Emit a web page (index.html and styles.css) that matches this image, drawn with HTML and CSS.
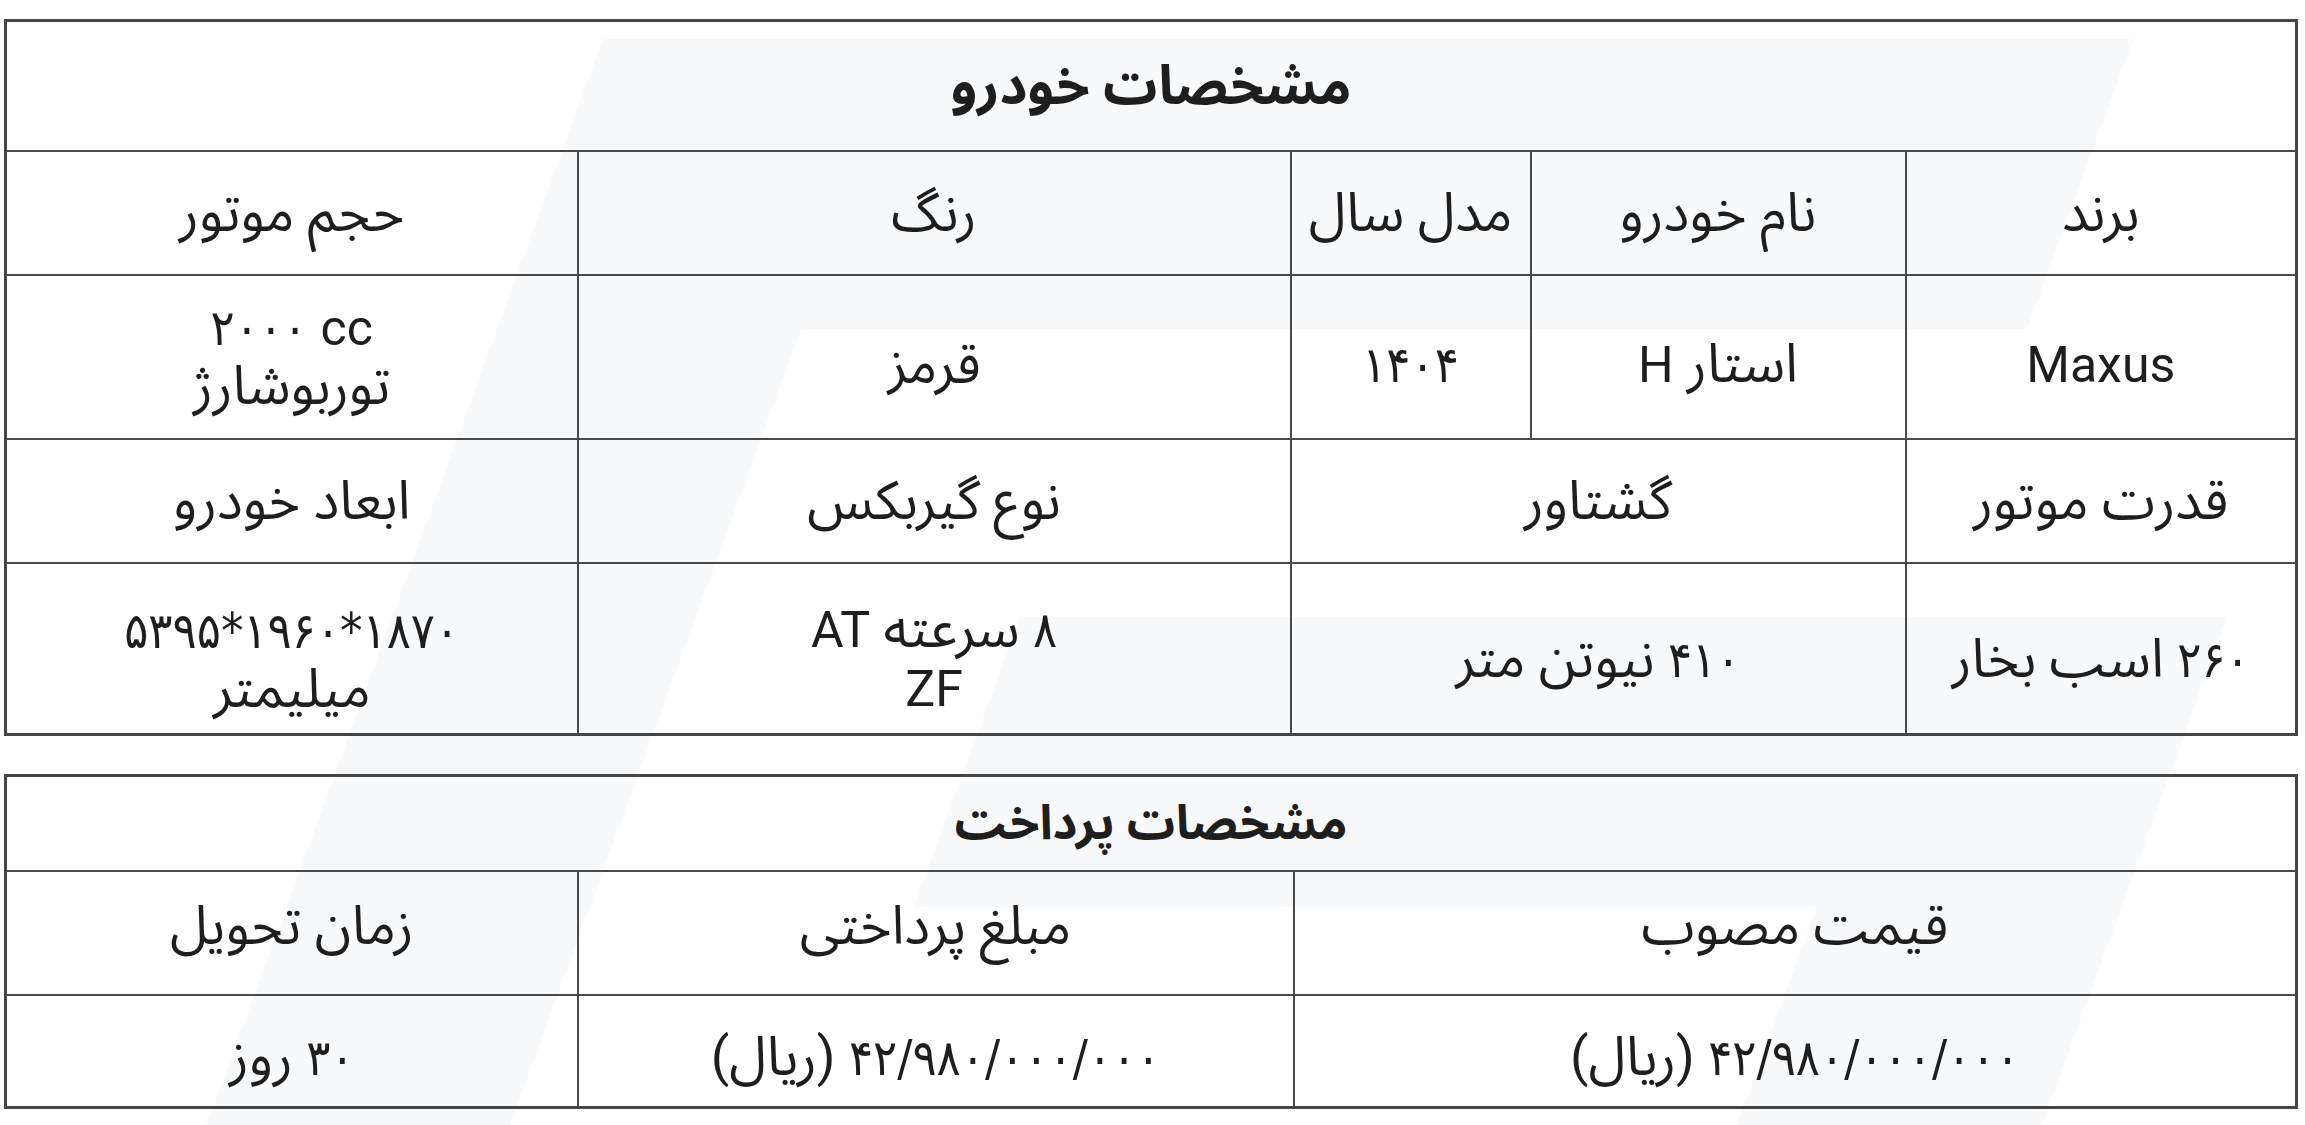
FILE: index.html
```html
<!DOCTYPE html>
<html lang="fa" dir="rtl">
<head>
<meta charset="utf-8">
<title>مشخصات خودرو</title>
<link rel="stylesheet" href="styles.css">
</head>
<body>
<div class="page">
  <svg class="watermark" width="2305" height="1125" viewBox="0 0 2305 1125" aria-hidden="true">
    <polygon points="603,39 2133,39 2027,329 801,329 510,1125 207,1125" />
    <polygon points="1020,617 2227,617 2042,1125 1737,1125 1817,907 914,907" />
  </svg>

  <table class="spec spec-car">
    <colgroup>
      <col class="c-brand"><col class="c-name"><col class="c-year"><col class="c-color"><col class="c-engine">
    </colgroup>
    <tr class="r-title"><th colspan="5">مشخصات خودرو</th></tr>
    <tr class="r-head">
      <td>برند</td><td>نام خودرو</td><td>مدل سال</td><td>رنگ</td><td>حجم موتور</td>
    </tr>
    <tr class="r-data">
      <td class="one"><span class="latin">Maxus</span></td>
      <td class="one">استار <span class="latin">H</span></td>
      <td class="one"><span class="num">۱۴۰۴</span></td>
      <td class="one">قرمز</td>
      <td><span class="ltr"><span class="num">۲۰۰۰</span> <span class="latin">cc</span></span><br>توربوشارژ</td>
    </tr>
    <tr class="r-head">
      <td>قدرت موتور</td><td colspan="2">گشتاور</td><td>نوع گیربکس</td><td>ابعاد خودرو</td>
    </tr>
    <tr class="r-data2">
      <td><span class="num">۲۶۰</span> اسب بخار</td>
      <td colspan="2"><span class="num">۴۱۰</span> نیوتن متر</td>
      <td><span class="num">۸</span> سرعته <span class="latin">AT</span><br><span class="latin">ZF</span></td>
      <td><span class="ltr num">۵۳۹۵*۱۹۶۰*۱۸۷۰</span><br>میلیمتر</td>
    </tr>
  </table>

  <table class="spec spec-pay">
    <colgroup>
      <col class="p-price"><col class="p-pay"><col class="p-time">
    </colgroup>
    <tr class="r-title2"><th colspan="3">مشخصات پرداخت</th></tr>
    <tr class="r-head2">
      <td>قیمت مصوب</td><td>مبلغ پرداختی</td><td>زمان تحویل</td>
    </tr>
    <tr class="r-data3">
      <td><span class="num">۴۲/۹۸۰/۰۰۰/۰۰۰</span> (ریال)</td>
      <td><span class="num">۴۲/۹۸۰/۰۰۰/۰۰۰</span> (ریال)</td>
      <td><span class="num">۳۰</span> روز</td>
    </tr>
  </table>
</div>
</body>
</html>
```

FILE: styles.css
```css
html {
  background: #ffffff;
}

body {
  margin: 0;
  font-family: Roboto, "Noto Sans Arabic", "DejaVu Sans", sans-serif;
  color: #1e1e1e;
}

.page {
  position: relative;
  width: 2305px;
  height: 1125px;
  padding: 19px 7px 0;
  box-sizing: border-box;
  display: flex;
  flex-direction: column;
  gap: 38px;
}

.watermark {
  position: absolute;
  left: 0;
  top: 0;
  z-index: -1;
}

.watermark polygon {
  fill: #f8f9fb;
}

.spec {
  width: 2291px;
  border-collapse: collapse;
  table-layout: fixed;
  border: 3px solid #454545;
}

.spec th,
.spec td {
  border: 2px solid #4a4a4a;
  padding: 0;
  text-align: center;
  vertical-align: middle;
  font-size: 54px;
  line-height: 58px;
  font-weight: 400;
}

.spec th {
  font-weight: 700;
  font-size: 54px;
}

.spec-pay th {
  font-size: 48px;
}

.latin {
  font-size: 50px;
}

.num {
  font-family: "DejaVu Sans Condensed", "Noto Sans Arabic", "DejaVu Sans", sans-serif;
  font-size: 50px;
}

.c-brand { width: 391px; }
.c-name { width: 375px; }
.c-year { width: 240px; }
.c-color { width: 713px; }
.c-engine { width: 572px; }

.p-price { width: 1003px; }
.p-pay { width: 716px; }
.p-time { width: 572px; }

.r-title { height: 130px; }
.r-head { height: 124px; }
.r-head2 { height: 124px; }
.r-data { height: 164px; }
.r-data2 { height: 172px; }
.r-title2 { height: 95px; }
.r-data3 { height: 113px; }

.r-data td.one {
  padding-top: 16px;
}

.r-data2 td {
  padding-top: 22px;
}

.r-head2 td {
  padding-bottom: 14px;
}

.r-data3 td {
  padding-top: 14px;
}

.ltr {
  direction: ltr;
  unicode-bidi: isolate;
}
```
